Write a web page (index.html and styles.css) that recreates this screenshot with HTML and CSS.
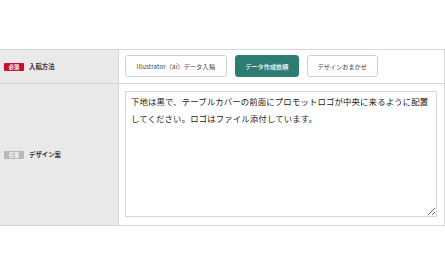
FILE: index.html
```html
<!DOCTYPE html>
<html lang="ja">
<head>
<meta charset="utf-8">
<link rel="stylesheet" href="styles.css">
</head>
<body>
<div class="form">
  <div class="row row-method">
    <div class="head"><span class="badge badge-req">必須</span><span class="label">入稿方法</span></div>
    <div class="cell">
      <div class="buttons">
        <button class="btn btn-ai">Illustrator（ai）データ入稿</button>
        <button class="btn btn-active">データ作成依頼</button>
        <button class="btn">デザインおまかせ</button>
      </div>
    </div>
  </div>
  <div class="row row-design">
    <div class="head"><span class="badge badge-opt">任意</span><span class="label">デザイン案</span></div>
    <div class="cell">
      <textarea class="design-text">下地は黒で、テーブルカバーの前面にプロモットロゴが中央に来るように配置してください。ロゴはファイル添付しています。</textarea>
    </div>
  </div>
</div>
</body>
</html>
```
FILE: styles.css
```css
html, body {
  margin: 0;
  padding: 0;
  background: #fff;
}
body {
  font-family: "Noto Sans CJK JP", "Noto Sans", sans-serif;
  color: #333;
}
.form {
  margin-top: 49px;
  border-top: 1px solid #d6d6d6;
  border-right: 1px solid #d6d6d6;
  width: 444px;
}
.row {
  display: grid;
  grid-template-columns: 119px 1fr;
  border-bottom: 1px solid #d6d6d6;
}
.row-method { height: 33px; }
.row-design { height: 141px; }
.head {
  background: #e9e9e9;
  border-right: 1px solid #d6d6d6;
  display: flex;
  align-items: center;
  padding-left: 4px;
  gap: 5px;
}
.badge {
  display: inline-flex;
  align-items: center;
  justify-content: center;
  width: 20px;
  height: 8px;
  font-size: 5.2px;
  color: #fff;
  font-weight: 700;
  border-radius: 1px;
}
.badge-req { background: #c8102e; }
.badge-opt { background: #b8b8b8; }
.label {
  font-size: 6.4px;
  font-weight: 700;
  color: #333;
}
.cell {
  display: flex;
  padding: 0 7px 0 6px;
}
.row-method .cell { align-items: center; }
.buttons {
  display: flex;
  gap: 8px;
  margin-top: -1px;
}
.btn {
  height: 22px;
  margin: 0;
  padding: 0 9.5px;
  font-family: inherit;
  font-size: 6.2px;
  color: #444;
  background: #fff;
  border: 1px solid #cfcfcf;
  border-radius: 3px;
}
.btn-ai {
  padding: 0 10.5px;
  letter-spacing: 0.1px;
}
.btn-active {
  background: #2e7d73;
  border-color: #2e7d73;
  color: #fff;
  font-weight: 500;
}
.row-design .cell {
  padding-top: 7px;
  padding-bottom: 8px;
}
.design-text {
  width: 100%;
  height: 126px;
  box-sizing: border-box;
  margin: 0;
  padding: 1px 5px;
  font-family: inherit;
  font-size: 8.4px;
  letter-spacing: 0.15px;
  line-height: 17px;
  color: #222;
  border: 1px solid #d6d6d6;
  border-radius: 0;
  resize: vertical;
}
```
